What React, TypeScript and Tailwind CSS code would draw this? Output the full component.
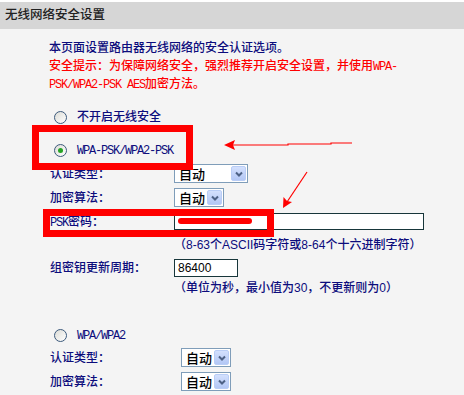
import React from 'react'

const M = ({ children }: { children: React.ReactNode }) => (
  <span className="font-['Liberation_Mono',monospace] text-[12px] tracking-[-1.2px]">{children}</span>
)

function Radio({ checked }: { checked?: boolean }) {
  return (
    <span className="flex h-[13px] w-[13px] items-center justify-center rounded-full border border-[#3c5a7c] bg-gradient-to-br from-[#dcdcd6] to-white">
      {checked && <span className="h-[5px] w-[5px] rounded-full bg-[#25a325]" />}
    </span>
  )
}

function Select({ width }: { width: string }) {
  return (
    <div className={`flex h-[19px] ${width} items-center justify-between border border-[#7f9db9] bg-white pl-[4px] pr-px`}>
      <span className="font-['Noto_Sans_CJK_SC',sans-serif] text-[13px] leading-none text-black">自动</span>
      <span className="flex h-[15px] w-[15px] items-center justify-center rounded-[2px] border border-[#b9cdf6] bg-gradient-to-b from-[#d3e0fd] to-[#b3c7f5]">
        <svg width="8" height="6" viewBox="0 0 8 6">
          <path d="M1 1.5 L4 4.5 L7 1.5" fill="none" stroke="#4d6185" strokeWidth="2" />
        </svg>
      </span>
    </div>
  )
}

function Row({ label, children, className = '', labelWidth = 'w-[124px]' }: { label: React.ReactNode; children: React.ReactNode; className?: string; labelWidth?: string }) {
  return (
    <div className={`flex h-[19px] items-center pl-[50px] ${className}`}>
      <div className={`${labelWidth} h-[18px] leading-[18px]`}>{label}</div>
      {children}
    </div>
  )
}

export default function App() {
  return (
    <div className="relative h-[395px] w-[464px] overflow-hidden bg-[#f4f4f4] font-['Liberation_Sans','Noto_Sans_CJK_SC',sans-serif] text-[12px] font-medium text-[#0c0c7c]">
      <div className="h-[2px] bg-white" />
      <div className="flex h-[27px] items-center bg-[#d6d6d6] pl-[5px] text-[12.5px] text-[#222]">无线网络安全设置</div>

      {/* intro */}
      <div className="pl-[49px] pt-[10px]">
        <div className="h-[18px] leading-[18px]">本页面设置路由器无线网络的安全认证选项。</div>
        <div className="h-[18px] leading-[18px] text-[#ff0000]">安全提示：为保障网络安全，强烈推荐开启安全设置，并使用<M>WPA-</M></div>
        <div className="h-[18px] leading-[18px] text-[#ff0000]"><M>PSK/WPA2-PSK AES</M>加密方法。</div>
      </div>

      <div className="mt-[14px] flex h-[20px] items-center pl-[54px]">
        <Radio />
        <span className="ml-[10px] leading-[18px]">不开启无线安全</span>
      </div>

      <div className="mt-[13px] flex h-[20px] items-center pl-[54px]">
        <Radio checked />
        <span className="ml-[10px] leading-[18px]"><M>WPA-PSK/WPA2-PSK</M></span>
      </div>

      <Row label="认证类型：" className="mt-[4px]">
        <Select width="w-[74px]" />
      </Row>
      <Row label="加密算法：" className="mt-[5px]">
        <Select width="w-[50px]" />
      </Row>
      <Row label={<span><M>PSK</M>密码：</span>} className="mt-[5px]">
        <div className="relative h-[17px] w-[250px] border border-[#17363a] bg-white">
          <div className="absolute left-[3px] top-[4px] h-[6px] w-[74px] rounded-full bg-[#ff0000]" />
        </div>
      </Row>
      <div className="mt-[5px] h-[18px] pl-[174px] leading-[18px]">（8-63个ASCII码字符或8-64个十六进制字符）</div>

      <Row label="组密钥更新周期：" className="mt-[4px]">
        <div className="flex h-[18px] w-[64px] items-center border border-[#17363a] bg-white pl-[3px] text-[12px] font-normal text-black">86400</div>
      </Row>
      <div className="mt-[2px] h-[18px] pl-[174px] leading-[18px]">（单位为秒，最小值为30，不更新则为0）</div>

      <div className="mt-[28px] flex h-[20px] items-center pl-[54px]">
        <Radio />
        <span className="ml-[10px] leading-[18px]"><M>WPA/WPA2</M></span>
      </div>
      <Row label="认证类型：" labelWidth="w-[131px]" className="mt-[3px]">
        <Select width="w-[50px]" />
      </Row>
      <Row label="加密算法：" labelWidth="w-[131px]" className="mt-[5px]">
        <Select width="w-[50px]" />
      </Row>

      {/* annotations */}
      <div className="absolute left-[32px] top-[125px] h-[45px] w-[161px] border-[7px] border-[#ff0000]" />
      <div className="absolute left-[43px] top-[209px] h-[28px] w-[231px] border-[7px] border-[#ff0000]" />
      <svg className="absolute left-0 top-0" width="464" height="395">
        <path d="M233 145 L288 145 L288 144 L331 144 L331 143 L352 143" fill="none" stroke="#ff0000" strokeWidth="1.2" />
        <path d="M224 145 L235 140 L233 145 L235 150 Z" fill="#ff0000" />
        <path d="M307 172 L287 202" fill="none" stroke="#ff0000" strokeWidth="1.2" />
        <path d="M283 208 L283.5 197 L287 201 L292 202 Z" fill="#ff0000" />
      </svg>
    </div>
  )
}
